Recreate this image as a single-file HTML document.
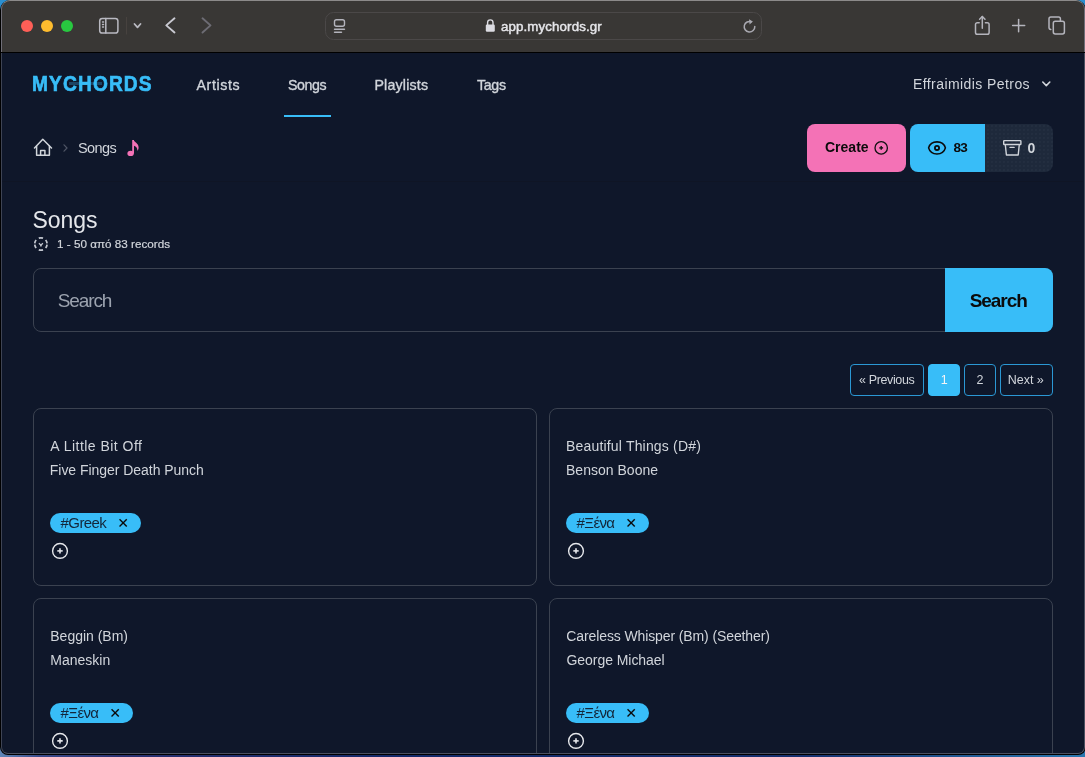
<!DOCTYPE html>
<html><head><meta charset="utf-8">
<style>
*{margin:0;padding:0;box-sizing:border-box}
html,body{width:1085px;height:757px;overflow:hidden;background:#4a5878;font-family:"Liberation Sans",sans-serif}
.a{position:absolute}
.t{position:absolute;white-space:nowrap;line-height:1}
#desk{position:absolute;left:0;top:0;width:1085px;height:757px;background:linear-gradient(#2b8fd0 0,#2b8fd0 12px,transparent 12px),linear-gradient(90deg,#5f86b8 0,#3a4a8a 40px,#2a3170 120px,#142a6a 400px,#16306e 800px,#2a78b0 1085px)}
#win{position:absolute;left:0;top:0;width:1086px;height:755px;background:#000;border-radius:10px 10px 8px 8px}
#tb{position:absolute;left:1px;top:0;width:1084px;height:52px;background:#393735;border-radius:9px 9px 0 0;border-top:1px solid #8c8a8a;border-left:1px solid #6f6e78;border-right:1px solid #6f6e78}
#content{position:absolute;left:1px;top:53px;width:1084px;height:701px;background:#0f172a;border-left:1px solid #3e4454;border-right:1px solid #4b5060;border-bottom:1px solid #4b5060;border-radius:0 0 7px 7px;overflow:hidden}
.dot{position:absolute;top:20px;width:12px;height:12px;border-radius:50%}
.nav{color:#d1d5db;font-size:14.2px;-webkit-text-stroke:0.35px #d1d5db}
.card{position:absolute;width:504px;height:178px;border:1px solid #3b4250;border-radius:8px}
.ct{font-size:14px;color:#d1d5db}
.pill{position:absolute;height:20px;border-radius:10px;background:#38bdf8}
.pg{position:absolute;top:364px;height:32px;border:1px solid #2b98d4;border-radius:4px}
.tg{font-size:15px;color:#13263a}
.pt{font-size:12.5px;color:#d1d5db}
svg{position:absolute;overflow:visible}
</style></head><body>
<div id="desk"></div>
<div id="win">
 <div id="tb"></div>
 <div id="content"></div>
</div>

<!-- toolbar -->
<div class="dot" style="left:21px;background:#fe5f57"></div>
<div class="dot" style="left:41px;background:#febc2e"></div>
<div class="dot" style="left:61px;background:#28c840"></div>
<svg style="left:0;top:0" width="1085" height="52">
 <g fill="none" stroke="#b9b9c1" stroke-width="1.6" stroke-linecap="round" stroke-linejoin="round">
  <rect x="99.7" y="18.5" width="18.2" height="14.6" rx="2.6" stroke-width="1.5"/>
  <line x1="105.8" y1="18.5" x2="105.8" y2="33.1" stroke-width="1.5"/>
  <line x1="102.5" y1="22" x2="103.6" y2="22" stroke-width="1.3"/>
  <line x1="102.5" y1="24.5" x2="103.6" y2="24.5" stroke-width="1.3"/>
  <line x1="102.5" y1="27" x2="103.6" y2="27" stroke-width="1.3"/>
  <polyline points="134.5,24 137.5,27.3 140.5,24" stroke-width="1.8"/>
  <polyline points="174.5,18.3 166.3,25.4 174.5,32.5" stroke="#c9c9d1" stroke-width="1.9"/>
  <polyline points="202.5,18.3 210.5,25.4 202.5,32.5" stroke="#6d6c74" stroke-width="1.9"/>
 </g>
 <line x1="126.5" y1="17" x2="126.5" y2="34.5" stroke="#47423f" stroke-width="1"/>
 <rect x="325.5" y="12.5" width="436" height="27" rx="8" fill="#393735" stroke="#4b4848" stroke-width="1"/>
 <g fill="none" stroke="#b4b4bc" stroke-width="1.4" stroke-linecap="round">
  <rect x="334.5" y="19.7" width="10" height="6.5" rx="2"/>
  <line x1="334.5" y1="29.2" x2="344.5" y2="29.2"/>
  <line x1="334.5" y1="32.2" x2="341.5" y2="32.2"/>
 </g>
 <g fill="#dcdce2">
  <rect x="485.8" y="24.5" width="9" height="7.3" rx="1.2"/>
 </g>
 <path d="M487.6 25 V22.6 a2.7 2.7 0 0 1 5.4 0 V25" fill="none" stroke="#dcdce2" stroke-width="1.4"/>
 <g fill="none" stroke="#a9a9b1" stroke-width="1.5" stroke-linecap="round">
  <path d="M751.5 21.8 A5.3 5.3 0 1 0 754.8 26.5"/>
 </g>
 <path d="M749 19.3 L752.8 21.6 L749.6 24.6 Z" fill="#a9a9b1"/>
 <g fill="none" stroke="#b4b4bc" stroke-width="1.5" stroke-linecap="round" stroke-linejoin="round">
  <path d="M979.2 22.8 H977.3 a1.8 1.8 0 0 0 -1.8 1.8 V32.4 a1.8 1.8 0 0 0 1.8 1.8 H987.3 a1.8 1.8 0 0 0 1.8 -1.8 V24.6 a1.8 1.8 0 0 0 -1.8 -1.8 H985.4"/>
  <line x1="982.3" y1="16.6" x2="982.3" y2="28.3"/>
  <polyline points="979.6,19.2 982.3,16.5 985,19.2"/>
  <line x1="1012.6" y1="25.6" x2="1024.7" y2="25.6"/>
  <line x1="1018.6" y1="19.4" x2="1018.6" y2="31.8"/>
  <path d="M1050.8 29.4 a1.8 1.8 0 0 1 -1.8 -1.8 V18.7 a1.8 1.8 0 0 1 1.8 -1.8 H1058.6 a1.8 1.8 0 0 1 1.8 1.8 V20.9"/>
  <rect x="1053.3" y="21.3" width="11.1" height="12.6" rx="1.9"/>
 </g>
</svg>
<div class="t" style="will-change:transform;left:501.3px;top:19.5px;font-size:13.3px;letter-spacing:0.12px;color:#e6e6ea;-webkit-text-stroke:0.45px #e6e6ea">app.mychords.gr</div>

<div id="clip" style="will-change:transform;position:absolute;left:2px;top:53px;width:1082px;height:700px;overflow:hidden;border-radius:0 0 6px 6px"><div style="position:absolute;left:-2px;top:-53px;width:1085px;height:757px">
<!-- header -->
<div class="a" style="left:2px;top:181px;width:1081px;height:1px;background:#0f1525"></div>
<div class="a" style="left:68.5px;top:82px;width:33.5px;height:3.3px;background:#1c4464"></div>
<div class="t" style="left:31.8px;top:72.9px;font-size:22px;letter-spacing:1.3px;font-weight:bold;color:#38bdf8;-webkit-text-stroke:0.7px #38bdf8;transform:scaleX(0.87);transform-origin:0 0">MYCHORDS</div>

<div class="t nav" style="left:196.5px;top:77.9px;letter-spacing:0.62px">Artists</div>
<div class="t nav" style="left:288px;top:78.1px;letter-spacing:-0.4px">Songs</div>
<div class="a" style="left:284px;top:115px;width:47px;height:2px;background:#38bdf8"></div>
<div class="t nav" style="left:374.4px;top:78px;letter-spacing:0.2px">Playlists</div>
<div class="t nav" style="left:477px;top:78px;letter-spacing:-0.33px">Tags</div>
<div class="t" style="left:913px;top:77px;font-size:14px;letter-spacing:0.42px;color:#d1d5db">Effraimidis Petros</div>
<svg style="left:0;top:0" width="1085" height="260">
 <polyline points="1042.8,82 1046.3,85.6 1049.8,82" fill="none" stroke="#d1d5db" stroke-width="1.6" stroke-linecap="round" stroke-linejoin="round"/>
 <!-- home -->
 <g fill="none" stroke="#d1d5db" stroke-width="1.5" stroke-linejoin="round" stroke-linecap="round">
  <path d="M34.5 148 L42.8 139.3 L51.5 148"/>
  <path d="M36.6 146 V155.2 H49.4 V146"/>
  <path d="M40.6 155.2 V150.6 H44.9 V155.2"/>
  <polyline points="64,144.8 67,148 64,151.2" stroke="#4f5565" stroke-width="1.2"/>
 </g>
 <!-- note -->
 <g fill="#f472b6">
  <ellipse cx="130.6" cy="153.4" rx="3.2" ry="2.6"/>
  <rect x="132.2" y="140" width="1.8" height="13.5"/>
  <path d="M133.4 139.8 C134.6 142.6 138.6 143.4 138.6 147.4 C138.6 148.8 138.1 150 137.3 150.8 C137.6 148.2 136.2 146.4 134 145.8 Z"/>
 </g>
 <!-- subtitle icon dashed circle -->
 <g fill="none" stroke="#c4c8d0" stroke-width="1.3">
  <path d="M38.78 238.17 A6.2 6.2 0 0 1 43.02 238.17 M45.65 240.01 A6.2 6.2 0 0 1 47.07 243.35 M47.07 244.65 A6.2 6.2 0 0 1 45.65 247.99 M43.02 249.83 A6.2 6.2 0 0 1 38.78 249.83 M36.15 247.99 A6.2 6.2 0 0 1 34.73 244.65 M34.73 243.35 A6.2 6.2 0 0 1 36.15 240.01" stroke-width="1.7"/>
  <polyline points="38.9,243.3 40.9,245.2 42.9,243.3" stroke-width="1.3"/>
  <line x1="40.9" y1="245" x2="40.9" y2="246.6" stroke-width="1.5"/>
 </g>
</svg>

<!-- buttons -->
<div class="a" style="left:807px;top:124px;width:99px;height:48px;background:#f472b6;border-radius:8px"></div>
<div class="a" style="left:910px;top:124px;width:143px;height:48px;background-color:#1e293b;background-image:radial-gradient(circle at 2px 2px,rgba(255,255,255,.035) 0.6px,transparent 0.9px);background-size:4px 4px;border-radius:8px"></div>
<div class="a" style="left:910px;top:124px;width:75px;height:48px;background:#38bdf8;border-radius:8px 0 0 8px"></div>
<svg style="left:0;top:0" width="1085" height="200">
 <g fill="none" stroke="#111" stroke-width="1.3">
  <circle cx="881.2" cy="147.9" r="6.2"/>
 </g>
 <g stroke="#111" stroke-width="1.4"><line x1="879.3" y1="147.9" x2="883.1" y2="147.9"/><line x1="881.2" y1="146" x2="881.2" y2="149.8"/></g>
 <g fill="none" stroke="#0b0b0b" stroke-width="1.6">
  <path d="M928.6 147.9 C930.9 139.8 943.1 139.8 945.4 147.9 C943.1 156 930.9 156 928.6 147.9 Z"/>
  <circle cx="937" cy="147.9" r="2.1" stroke-width="1.8"/>
 </g>
 <g fill="none" stroke="#d1d5db" stroke-width="1.4" stroke-linejoin="round">
  <rect x="1003.7" y="140.6" width="17.2" height="3.9" rx="0.6"/>
  <path d="M1005.3 144.5 L1006.4 155 H1018.2 L1019.3 144.5"/>
  <line x1="1010" y1="147.4" x2="1014.1" y2="147.4" stroke-linecap="round"/>
 </g>
</svg>
<div class="t" style="left:825px;top:140px;font-size:14px;font-weight:bold;color:#0b0b0b">Create</div>
<div class="t" style="left:953.4px;top:141.3px;font-size:13.5px;letter-spacing:-0.6px;font-weight:bold;color:#0b0b0b">83</div>
<div class="t" style="left:1027.6px;top:141.2px;font-size:14px;font-weight:bold;color:#d1d5db">0</div>
<div class="t" style="left:78px;top:141.2px;font-size:14.5px;letter-spacing:-0.62px;color:#d1d5db">Songs</div>

<!-- title -->
<div class="t" style="left:32.6px;top:209.2px;font-size:23px;letter-spacing:-0.08px;color:#e5e7eb">Songs</div>
<div class="t" style="left:57.1px;top:238.3px;font-size:11.7px;letter-spacing:0px;color:#d1d5db;-webkit-text-stroke:0.2px #d1d5db">1 - 50 από 83 records</div>

<!-- search -->
<div class="a" style="left:33px;top:268px;width:1020px;height:64px;border:1px solid #3b4250;border-radius:8px"></div>
<div class="a" style="left:945px;top:268px;width:108px;height:64px;background:#38bdf8;border-radius:0 8px 8px 0"></div>
<div class="t" style="left:57.7px;top:290.9px;font-size:19px;letter-spacing:-1.1px;color:#9ca3af">Search</div>
<div class="t" style="left:969.7px;top:290.9px;font-size:19px;letter-spacing:-1.06px;font-weight:bold;color:#0b0b0b">Search</div>

<!-- pagination -->
<div class="pg" style="left:850px;width:74px"></div>
<div class="pg" style="left:928px;width:32px;background:#38bdf8;border-color:#38bdf8"></div>
<div class="pg" style="left:964px;width:32px"></div>
<div class="pg" style="left:1000px;width:53px"></div>
<div class="t pt" style="left:859px;top:373.6px;letter-spacing:-0.37px">« Previous</div>
<div class="t pt" style="left:940.8px;top:373.6px;color:#f3f4f6">1</div>
<div class="t pt" style="left:976.4px;top:373.6px">2</div>
<div class="t pt" style="left:1007.7px;top:373.6px">Next »</div>

<!-- cards -->
<div class="card" style="left:33px;top:408px"></div>
<div class="card" style="left:549px;top:408px"></div>
<div class="card" style="left:33px;top:598px"></div>
<div class="card" style="left:549px;top:598px"></div>
<div class="t ct" style="left:50.3px;top:439.1px;letter-spacing:0.47px">A Little Bit Off</div>
<div class="t ct" style="left:49.8px;top:462.9px;letter-spacing:-0.04px">Five Finger Death Punch</div>
<div class="pill" style="left:50px;top:513px;width:91px"></div>
<div class="t tg" style="left:60.6px;top:515.1px;letter-spacing:-0.6px">#Greek</div>
<svg style="left:0;top:0" width="1085" height="757"><g stroke="#0b0b0b" stroke-width="1.35" stroke-linecap="butt"><line x1="119.55" y1="519.30" x2="126.75" y2="526.50"/><line x1="126.75" y1="519.30" x2="119.55" y2="526.50"/></g><circle cx="60" cy="550.9" r="7.4" fill="none" stroke="#e5e7eb" stroke-width="1.4"/><g stroke="#e5e7eb" stroke-width="1.6"><line x1="57.3" y1="550.9" x2="62.7" y2="550.9"/><line x1="60.0" y1="548.2" x2="60.0" y2="553.6"/></g></svg>
<div class="t ct" style="left:566px;top:439.1px;letter-spacing:0.18px">Beautiful Things (D#)</div>
<div class="t ct" style="left:566px;top:462.9px;letter-spacing:0.02px">Benson Boone</div>
<div class="pill" style="left:566px;top:513px;width:83px"></div>
<div class="t tg" style="left:576.6px;top:515.1px;letter-spacing:-0.65px">#Ξένα</div>
<svg style="left:0;top:0" width="1085" height="757"><g stroke="#0b0b0b" stroke-width="1.35" stroke-linecap="butt"><line x1="627.55" y1="519.30" x2="634.75" y2="526.50"/><line x1="634.75" y1="519.30" x2="627.55" y2="526.50"/></g><circle cx="576" cy="550.9" r="7.4" fill="none" stroke="#e5e7eb" stroke-width="1.4"/><g stroke="#e5e7eb" stroke-width="1.6"><line x1="573.3" y1="550.9" x2="578.7" y2="550.9"/><line x1="576.0" y1="548.2" x2="576.0" y2="553.6"/></g></svg>
<div class="t ct" style="left:50.3px;top:629.1px;letter-spacing:-0.01px">Beggin (Bm)</div>
<div class="t ct" style="left:50.3px;top:652.9px;letter-spacing:0.0px">Maneskin</div>
<div class="pill" style="left:50px;top:703px;width:83px"></div>
<div class="t tg" style="left:60.6px;top:705.1px;letter-spacing:-0.65px">#Ξένα</div>
<svg style="left:0;top:0" width="1085" height="757"><g stroke="#0b0b0b" stroke-width="1.35" stroke-linecap="butt"><line x1="111.55" y1="709.30" x2="118.75" y2="716.50"/><line x1="118.75" y1="709.30" x2="111.55" y2="716.50"/></g><circle cx="60" cy="740.9" r="7.4" fill="none" stroke="#e5e7eb" stroke-width="1.4"/><g stroke="#e5e7eb" stroke-width="1.6"><line x1="57.3" y1="740.9" x2="62.7" y2="740.9"/><line x1="60.0" y1="738.2" x2="60.0" y2="743.6"/></g></svg>
<div class="t ct" style="left:566.3px;top:629.1px;letter-spacing:-0.11px">Careless Whisper (Bm) (Seether)</div>
<div class="t ct" style="left:566.5px;top:652.9px;letter-spacing:-0.05px">George Michael</div>
<div class="pill" style="left:566px;top:703px;width:83px"></div>
<div class="t tg" style="left:576.6px;top:705.1px;letter-spacing:-0.65px">#Ξένα</div>
<svg style="left:0;top:0" width="1085" height="757"><g stroke="#0b0b0b" stroke-width="1.35" stroke-linecap="butt"><line x1="627.55" y1="709.30" x2="634.75" y2="716.50"/><line x1="634.75" y1="709.30" x2="627.55" y2="716.50"/></g><circle cx="576" cy="740.9" r="7.4" fill="none" stroke="#e5e7eb" stroke-width="1.4"/><g stroke="#e5e7eb" stroke-width="1.6"><line x1="573.3" y1="740.9" x2="578.7" y2="740.9"/><line x1="576.0" y1="738.2" x2="576.0" y2="743.6"/></g></svg>
</div></div>
</body></html>
